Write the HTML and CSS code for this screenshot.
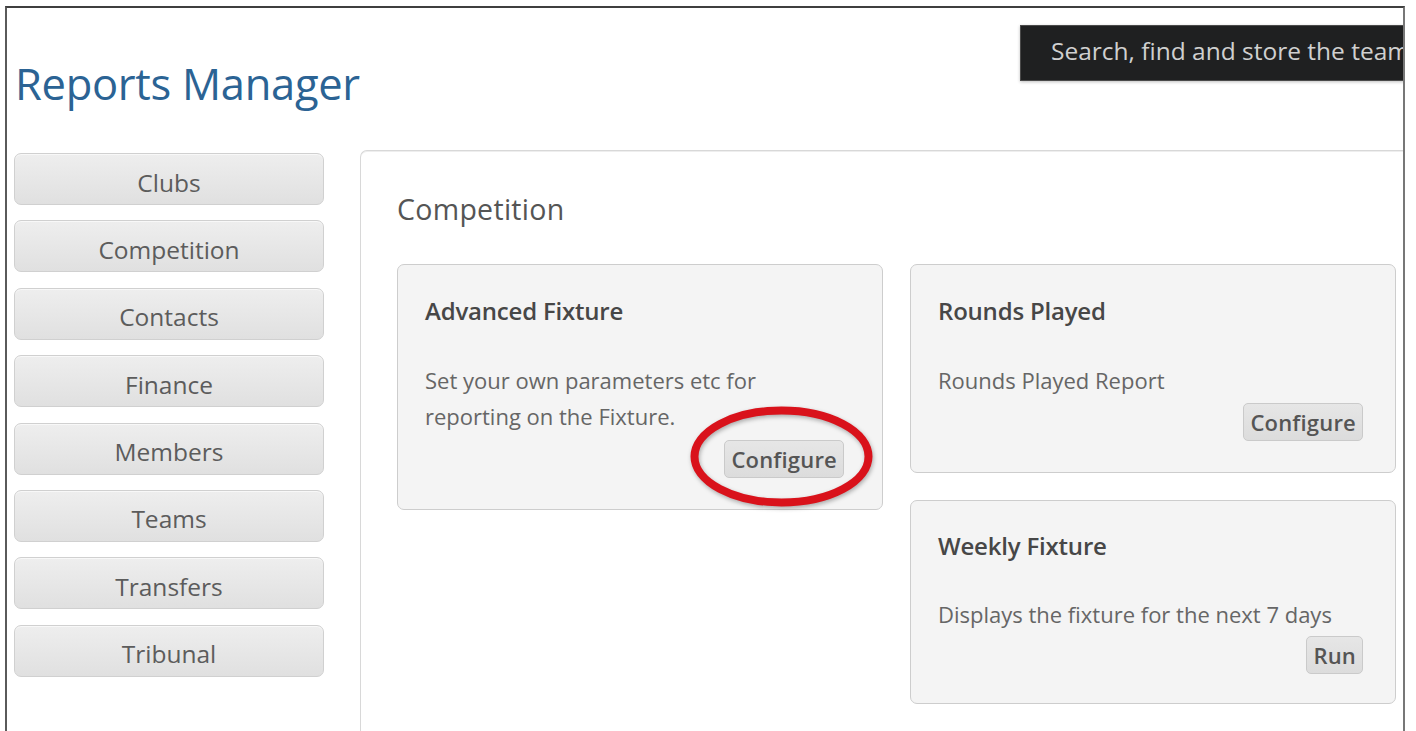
FILE: index.html
```html
<!DOCTYPE html>
<html lang="en">
<head>
<meta charset="utf-8">
<title>Reports Manager</title>
<link rel="stylesheet" href="styles.css">
</head>
<body>
<div class="frame">
  <header class="page-head">
    <h1 class="page-title">Reports Manager</h1>
    <div class="tooltip">Search, find and store the team details</div>
  </header>

  <div class="layout">
    <nav class="side-nav">
      <a class="nav-btn">Clubs</a>
      <a class="nav-btn">Competition</a>
      <a class="nav-btn">Contacts</a>
      <a class="nav-btn">Finance</a>
      <a class="nav-btn">Members</a>
      <a class="nav-btn">Teams</a>
      <a class="nav-btn">Transfers</a>
      <a class="nav-btn">Tribunal</a>
    </nav>

    <main class="panel">
      <h2 class="panel-title">Competition</h2>
      <div class="cards">
        <div class="col">
          <section class="card">
            <h3 class="card-title">Advanced Fixture</h3>
            <p class="card-desc">Set your own parameters etc for<br>reporting on the Fixture.</p>
            <div class="card-actions">
              <span class="marked">
                <button class="btn">Configure</button>
                <svg class="ring" width="185" height="103" viewBox="0 0 185 103" aria-hidden="true">
                  <ellipse cx="92.5" cy="51.5" rx="87" ry="46" fill="none" stroke="#d9121b" stroke-width="8"/>
                </svg>
              </span>
            </div>
          </section>
        </div>
        <div class="col">
          <section class="card">
            <h3 class="card-title">Rounds Played</h3>
            <p class="card-desc">Rounds Played Report</p>
            <div class="card-actions tight">
              <button class="btn">Configure</button>
            </div>
          </section>
          <section class="card compact">
            <h3 class="card-title">Weekly Fixture</h3>
            <p class="card-desc">Displays the fixture for the next 7 days</p>
            <div class="card-actions tight">
              <button class="btn">Run</button>
            </div>
          </section>
        </div>
      </div>
    </main>
  </div>
</div>
</body>
</html>
```

FILE: styles.css
```css
* {
  box-sizing: border-box;
}

html,
body {
  margin: 0;
  padding: 0;
  background: #ffffff;
  overflow: hidden;
}

body {
  font-family: "Open Sans", "Noto Sans", "DejaVu Sans", sans-serif;
  color: #555555;
}

/* outer window frame */
.frame {
  position: relative;
  margin: 6px 0 0 5px;
  width: 1400px;
  height: 760px;
  border-top: 2px solid #3f3f3f;
  border-left: 2px solid #5a5a5a;
  border-right: 2px solid #777777;
  overflow: hidden;
}

/* header */
.page-head {
  position: relative;
  height: 142px;
  padding: 49px 0 0 8px;
}

.page-title {
  margin: 0;
  font-size: 43.5px;
  font-weight: 400;
  line-height: 54px;
  color: #2b6394;
  letter-spacing: -0.3px;
}

.tooltip {
  position: absolute;
  top: 17px;
  left: 1013px;
  width: 420px;
  height: 56px;
  padding: 0 0 0 30px;
  background: #1f2021;
  border: 1px solid #4a4a4a;
  color: #d0d0d0;
  font-size: 24.5px;
  line-height: 50px;
  white-space: nowrap;
  box-shadow: 0 1px 3px rgba(0, 0, 0, 0.25);
}

/* body layout */
.layout {
  display: flex;
  align-items: flex-start;
  gap: 36px;
  padding-left: 7px;
}

.side-nav {
  display: flex;
  flex-direction: column;
  gap: 15.4px;
  width: 310px;
  padding-top: 3px;
  flex-shrink: 0;
}

.nav-btn {
  display: flex;
  align-items: center;
  justify-content: center;
  height: 52px;
  padding-top: 6px;
  border: 1px solid #d0d0d0;
  border-radius: 7px;
  background: linear-gradient(#eeeeee, #e0e0e0);
  box-shadow: inset 0 1px 0 #f8f8f8;
  color: #5c5c5c;
  font-size: 24.5px;
  cursor: pointer;
}

/* main panel */
.panel {
  flex: 1;
  min-height: 600px;
  padding: 39px 0 0 36px;
  border: 1px solid #d8d8d8;
  border-right: none;
  border-bottom: none;
  border-radius: 7px 0 0 0;
  box-shadow: inset 0 1px 0 #eeeeee;
}

.panel-title {
  margin: 0 0 36px 0;
  font-size: 28.5px;
  font-weight: 400;
  line-height: 38px;
  color: #555555;
  letter-spacing: 0.3px;
}

.cards {
  display: flex;
  gap: 27px;
  align-items: flex-start;
}

.col {
  display: flex;
  flex-direction: column;
  gap: 27px;
  width: 486px;
}

.card {
  padding: 32px 28px 31px 27px;
  border: 1px solid #cdcdcd;
  border-radius: 7px;
  background: #f4f4f4;
}

.card.compact {
  padding-top: 31px;
  padding-bottom: 29px;
}

.card-title {
  margin: 0;
  font-size: 24px;
  font-weight: 600;
  line-height: 28px;
  color: #474747;
  letter-spacing: -0.2px;
}

.card-desc {
  margin: 37px 0 0 0;
  font-size: 22px;
  line-height: 36px;
  color: #666666;
}

.compact .card-desc {
  margin-top: 36px;
}

.card-actions {
  display: flex;
  justify-content: flex-end;
  margin-top: 6px;
  padding-right: 10px;
}

.card-actions.tight {
  margin-top: 5px;
  padding-right: 4px;
}

.compact .card-actions.tight {
  margin-top: 4px;
}

.btn {
  height: 38px;
  padding: 0 6px;
  border: 1px solid #cacaca;
  border-radius: 5px;
  background: linear-gradient(#e6e6e6, #dcdcdc);
  color: #555555;
  font-family: inherit;
  font-size: 22px;
  font-weight: 600;
  letter-spacing: 0.2px;
  cursor: pointer;
}

/* annotated button with a hand-drawn ring */
.marked {
  position: relative;
  display: inline-block;
}

.ring {
  position: absolute;
  left: -35px;
  top: -35px;
  filter: drop-shadow(1px 2px 2px rgba(0, 0, 0, 0.3));
  pointer-events: none;
}
```
